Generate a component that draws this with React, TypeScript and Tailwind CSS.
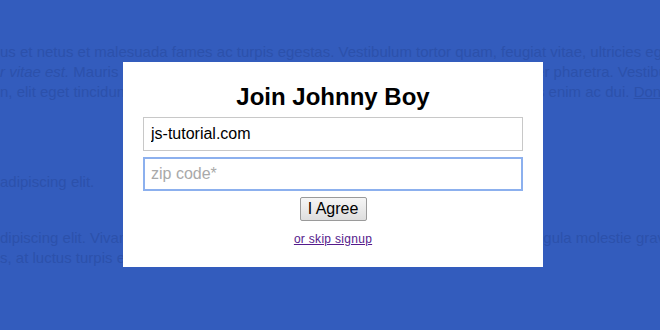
import React from "react";

const font = { fontFamily: '"Liberation Sans", Arial, sans-serif' };

export default function App() {
  return (
    <div className="relative h-[330px] w-[660px] overflow-hidden bg-[#335cbd]" style={font}>
      {/* page content behind the overlay */}
      <div className="pt-[42px] text-[15px] leading-[20px] text-[#2c51ab] whitespace-nowrap">
        <p>us et netus et malesuada fames ac turpis egestas.  Vestibulum tortor quam, feugiat vitae, ultricies eget, tempor sit amet.</p>
        <p>
          <em>r vitae est.</em> Mauris placerat eleifend leo. Quisque sit amet est et sapien ullamcorper pharetra. Vestibulum erat wisi.
        </p>
        <p>
          n, elit eget tincidunt condimentum, eros ipsum rutrum orci, sagittis in tempus lacus enim ac dui. <a className="underline">Donec non enim</a>
        </p>
        <p className="mt-[70px]">adipiscing elit.</p>
        <p className="mt-[36px]">dipiscing elit. Vivamus magna justo, lacinia eget consectetur sed, convallis tellus ligula molestie gravida.</p>
        <p>s, at luctus turpis elit sit amet quam. Vivamus pretium ornare est.</p>
      </div>

      {/* modal */}
      <div className="absolute left-[123px] top-[62px] h-[205px] w-[420px] bg-white px-5 pt-[20px]">
        <h1 className="text-center text-[24px] font-bold leading-[30px] text-black">Join Johnny Boy</h1>
        <div className="mt-[5px] flex flex-col gap-[6px]">
          <input
            defaultValue="js-tutorial.com"
            className="h-[34px] w-full border border-[#c8c8c8] px-[7px] text-[16px] text-black outline-none"
            style={font}
          />
          <input
            placeholder="zip code*"
            className="h-[34px] w-full border-2 border-[#8cb0ee] px-[6px] text-[16px] text-black outline-none placeholder:text-[#a9a9a9]"
            style={font}
          />
        </div>
        <div className="mt-[6px] flex justify-center">
          <button
            className="h-[24px] w-[67px] rounded-[2px] border border-[#9a9a9a] bg-gradient-to-b from-[#f6f6f6] to-[#dedede] text-[16px] leading-[20px] text-black"
            style={font}
          >
            I Agree
          </button>
        </div>
        <div className="mt-[10px] text-center text-[12px] leading-[16px] tracking-[0.3px]">
          <a className="text-[#551a8b] underline">or skip signup</a>
        </div>
      </div>
    </div>
  );
}
